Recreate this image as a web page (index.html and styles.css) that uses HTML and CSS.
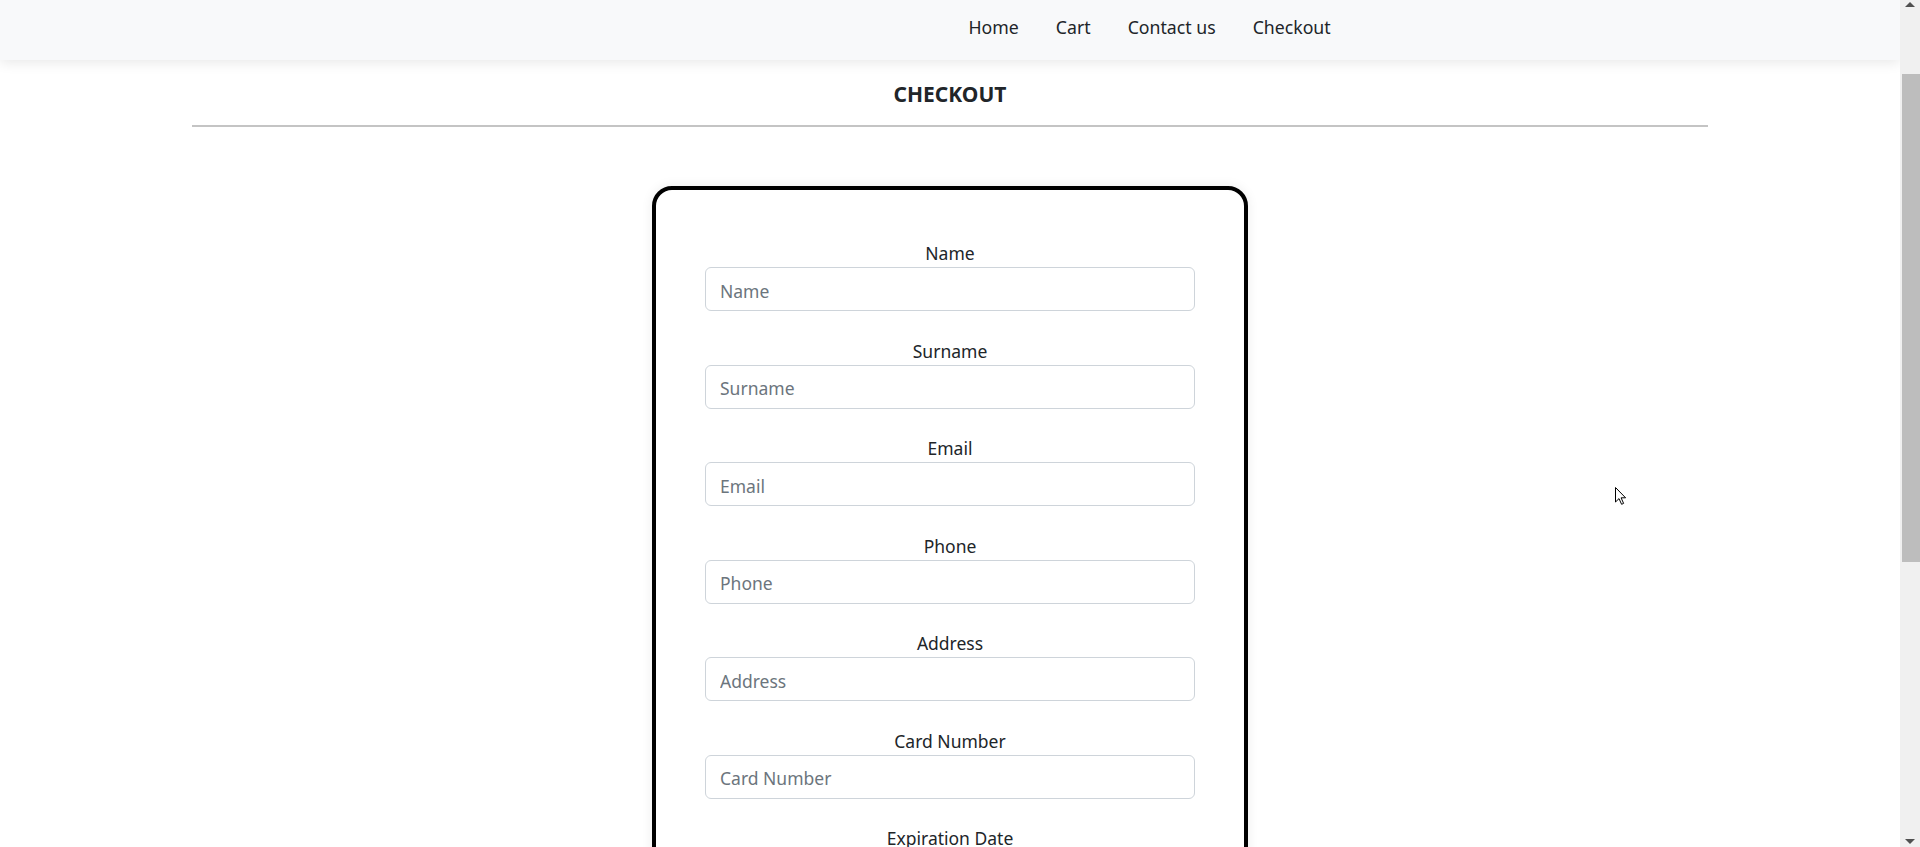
FILE: index.html
```html
<!DOCTYPE html>
<html lang="en">
<head>
<meta charset="utf-8">
<title>Checkout</title>
<link rel="stylesheet" href="styles.css">
</head>
<body>
<div class="page">
  <nav class="navbar">
    <ul class="nav-links">
      <li><a href="#">Home</a></li>
      <li><a href="#">Cart</a></li>
      <li><a href="#">Contact us</a></li>
      <li><a href="#">Checkout</a></li>
    </ul>
  </nav>
  <main class="content">
    <h1 class="title">CHECKOUT</h1>
    <hr class="divider">
    <form class="card">
      <div class="group"><label class="label" for="name">Name</label><input class="field" id="name" placeholder="Name"></div>
      <div class="group"><label class="label" for="surname">Surname</label><input class="field" id="surname" placeholder="Surname"></div>
      <div class="group"><label class="label" for="email">Email</label><input class="field" id="email" placeholder="Email"></div>
      <div class="group"><label class="label" for="phone">Phone</label><input class="field" id="phone" placeholder="Phone"></div>
      <div class="group"><label class="label" for="address">Address</label><input class="field" id="address" placeholder="Address"></div>
      <div class="group"><label class="label" for="card">Card Number</label><input class="field" id="card" placeholder="Card Number"></div>
      <div class="group"><label class="label" for="exp">Expiration Date</label><input class="field" id="exp" placeholder="Expiration Date"></div>
      <div class="group"><label class="label" for="cvv">CVV</label><input class="field" id="cvv" placeholder="CVV"></div>
    </form>
  </main>
</div>
<div class="scrollbar">
  <div class="arrow arrow-up"></div>
  <div class="thumb"></div>
  <div class="track-rest"></div>
  <div class="arrow arrow-down"></div>
</div>
<svg class="cursor" width="14" height="20" viewBox="0 0 14 20"><path d="M1.5 1.5 L1.5 16 L5 12.6 L7.6 18.3 L9.6 17.4 L7.1 11.8 L11.6 11.8 Z" fill="#fff" stroke="#000" stroke-width="1" stroke-linejoin="miter"/></svg>
</body>
</html>
```
FILE: styles.css
```css
html, body {
  margin: 0;
  padding: 0;
  height: 100%;
}
body {
  display: flex;
  height: 847px;
  overflow: hidden;
  font-family: "Noto Sans", "Open Sans", sans-serif;
  color: #212529;
  background: #fff;
}
.page {
  flex: 1;
  min-width: 0;
  overflow: hidden;
}
.navbar {
  height: 60px;
  background: #f8f9fa;
  box-shadow: 0 3px 12px rgba(0, 0, 0, 0.09);
  position: relative;
  z-index: 1;
}
.nav-links {
  list-style: none;
  margin: 0;
  padding: 14px 0 0 950px;
  display: flex;
}
.nav-links a {
  display: block;
  padding: 0 18.5px;
  font-size: 17.7px;
  line-height: 27px;
  color: #212529;
  text-decoration: none;
}
.content {
  padding-top: 22px;
}
.title {
  margin: 0;
  text-align: center;
  font-size: 21px;
  line-height: 25px;
  font-weight: 700;
  color: #212529;
}
.divider {
  width: 1516px;
  height: 2px;
  border: 0;
  background: #c4c4c4;
  margin: 18px auto 0;
}
.card {
  width: 596px;
  box-sizing: border-box;
  margin: 59px auto 0;
  border: 4px solid #000;
  border-radius: 20px;
  padding: 53px 49px 40px;
  box-shadow: 0 0 12px rgba(0, 0, 0, 0.08);
  display: flex;
  flex-direction: column;
  gap: 29.5px;
}
.group {
  display: flex;
  flex-direction: column;
}
.label {
  text-align: center;
  font-size: 17.5px;
  line-height: 21px;
  padding-bottom: 3px;
  color: #212529;
}
.field {
  height: 44px;
  box-sizing: border-box;
  border: 1px solid #ced4da;
  border-radius: 6px;
  padding: 3px 14px 0;
  font-family: inherit;
  font-size: 17.5px;
  color: #212529;
  background: #fff;
}
.field::placeholder {
  color: #6c757d;
}
.scrollbar {
  width: 20px;
  flex: none;
  background: #f0f0f0;
  display: flex;
  flex-direction: column;
}
.arrow {
  height: 17px;
  display: flex;
  justify-content: center;
}
.arrow-up {
  align-items: flex-start;
}
.arrow-down {
  align-items: flex-end;
}
.arrow-up::before {
  content: "";
  margin-top: 2px;
  border-left: 5px solid transparent;
  border-right: 5px solid transparent;
  border-bottom: 5px solid #505050;
}
.arrow-down::before {
  content: "";
  margin-bottom: 3px;
  border-left: 5px solid transparent;
  border-right: 5px solid transparent;
  border-top: 5px solid #505050;
}
.thumb {
  margin: 57px 0 0 2px;
  height: 488px;
  background: #bdbdbd;
}
.track-rest {
  flex: 1;
}
.cursor {
  position: absolute;
  left: 1614px;
  top: 486px;
}
```
